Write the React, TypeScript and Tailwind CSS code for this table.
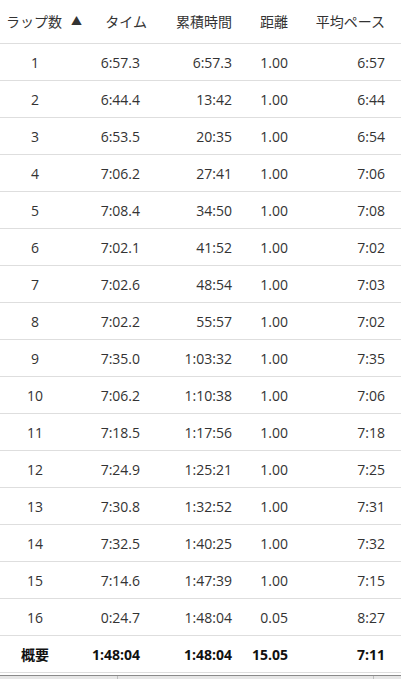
import React from 'react';

interface Lap {
  lap: string;
  time: string;
  total: string;
  dist: string;
  pace: string;
}

const laps: Lap[] = [
  { lap: '1', time: '6:57.3', total: '6:57.3', dist: '1.00', pace: '6:57' },
  { lap: '2', time: '6:44.4', total: '13:42', dist: '1.00', pace: '6:44' },
  { lap: '3', time: '6:53.5', total: '20:35', dist: '1.00', pace: '6:54' },
  { lap: '4', time: '7:06.2', total: '27:41', dist: '1.00', pace: '7:06' },
  { lap: '5', time: '7:08.4', total: '34:50', dist: '1.00', pace: '7:08' },
  { lap: '6', time: '7:02.1', total: '41:52', dist: '1.00', pace: '7:02' },
  { lap: '7', time: '7:02.6', total: '48:54', dist: '1.00', pace: '7:03' },
  { lap: '8', time: '7:02.2', total: '55:57', dist: '1.00', pace: '7:02' },
  { lap: '9', time: '7:35.0', total: '1:03:32', dist: '1.00', pace: '7:35' },
  { lap: '10', time: '7:06.2', total: '1:10:38', dist: '1.00', pace: '7:06' },
  { lap: '11', time: '7:18.5', total: '1:17:56', dist: '1.00', pace: '7:18' },
  { lap: '12', time: '7:24.9', total: '1:25:21', dist: '1.00', pace: '7:25' },
  { lap: '13', time: '7:30.8', total: '1:32:52', dist: '1.00', pace: '7:31' },
  { lap: '14', time: '7:32.5', total: '1:40:25', dist: '1.00', pace: '7:32' },
  { lap: '15', time: '7:14.6', total: '1:47:39', dist: '1.00', pace: '7:15' },
  { lap: '16', time: '0:24.7', total: '1:48:04', dist: '0.05', pace: '8:27' },
];

const cols = 'grid grid-cols-[85px_65px_90px_55px_106px] items-center';

const Row: React.FC<{ lap: Lap; bold?: boolean }> = ({ lap, bold }) => (
  <div className={`${cols} h-[37px] border-b border-[#dedede] ${bold ? 'font-bold text-[#111]' : 'text-[#333]'}`}>
    <div className="w-[70px] text-center">{lap.lap}</div>
    <div className="text-right pr-[10px]">{lap.time}</div>
    <div className="text-right pr-[8px]">{lap.total}</div>
    <div className="text-right pr-[7px]">{lap.dist}</div>
    <div className="text-right pr-[16px]">{lap.pace}</div>
  </div>
);

export default function App() {
  return (
    <div
      className="w-[401px] h-[679px] overflow-hidden bg-white text-[14px]"
      style={{ fontFamily: '"Open Sans", "Noto Sans CJK JP", sans-serif' }}
    >
      <div className={`${cols} h-[44px] border-b border-[#dedede] text-[#333]`}>
        <div className="pl-[6px] whitespace-nowrap flex items-center">
          ラップ数
          <span className="ml-[9px] text-[11px]">▲</span>
        </div>
        <div className="text-right pr-[3px]">タイム</div>
        <div className="text-right pr-[8px]">累積時間</div>
        <div className="text-right pr-[7px]">距離</div>
        <div className="text-right pr-[16px]">平均ペース</div>
      </div>
      {laps.map((l) => (
        <Row key={l.lap} lap={l} />
      ))}
      <Row bold lap={{ lap: '概要', time: '1:48:04', total: '1:48:04', dist: '15.05', pace: '7:11' }} />
      <div className="mt-[2px] h-[10px] border-t border-[#8a8a8a] bg-[#e6e6e6] flex">
        <div className="w-[118px] border-r border-[#bdbdbd]" />
        <div className="w-[256px] border-r border-[#bdbdbd]" />
      </div>
    </div>
  );
}
